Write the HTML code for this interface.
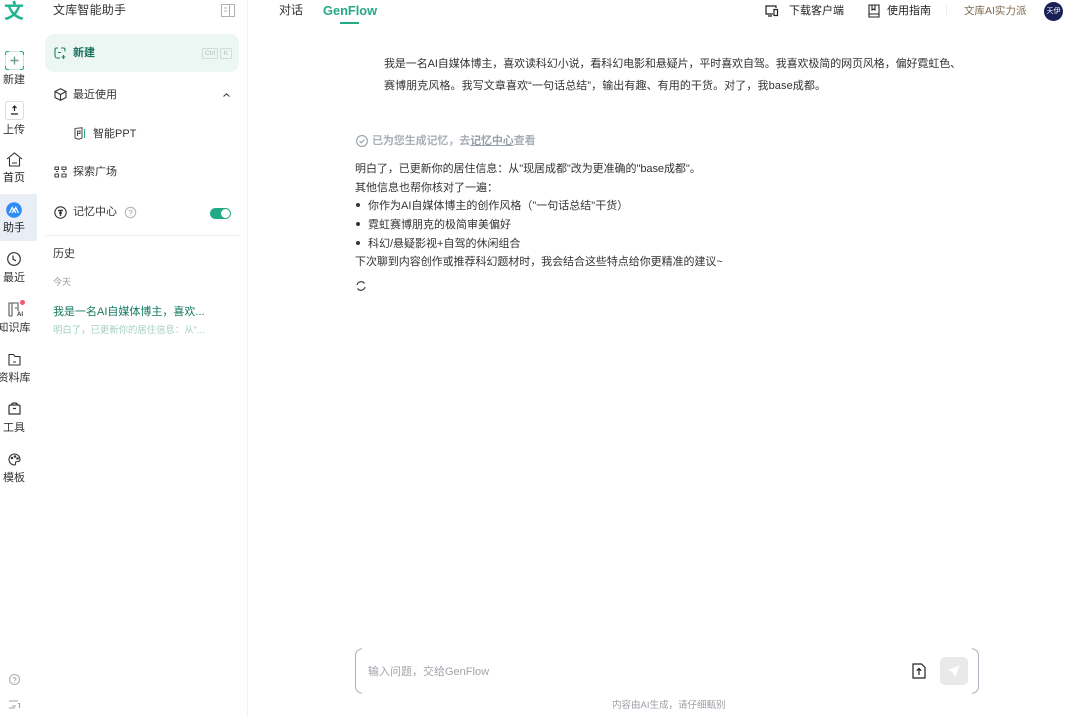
<!DOCTYPE html>
<html lang="zh-CN">
<head>
<meta charset="utf-8">
<title>文库智能助手</title>
<style>
html,body{margin:0;padding:0;width:1079px;height:717px;overflow:hidden;background:#fff}
body{position:relative;font-family:"Liberation Sans","Noto Sans CJK SC",sans-serif;color:#2b2f36}
.t{position:absolute;white-space:nowrap;line-height:16px;height:16px;font-size:11px}
.c{transform:translateX(-50%);font-size:11px;color:#333}
.b{position:absolute;display:block}
svg{position:absolute;overflow:visible;fill:none;stroke:#333;stroke-width:1.1}
</style>
</head>
<body>
<!-- rail -->
<div class="b" style="left:0;top:194px;width:37px;height:47px;background:#e9edf5"></div>
<div class="t" style="left:4px;top:0;font-size:20px;line-height:24px;height:24px;font-weight:bold;color:#1fb58f">文</div>

<div class="b" style="left:5px;top:51px;width:17px;height:17px;border:1px solid #d5dce0;border-radius:3px"></div>
<svg style="left:5px;top:51px" width="19" height="19"><path d="M.5 4V2.500C.5 1.200 1.200.5 2.500.5H4M15 .5H16.500C17.800.5 18.500 1.200 18.500 2.500V4M18.500 15V16.500C18.500 17.800 17.800 18.500 16.500 18.500H15M4 18.500H2.500C1.200 18.500.5 17.800.5 16.500V15" stroke="#26a985"/></svg>
<svg style="left:9px;top:55px" width="11" height="11"><path d="M5.500 1.500V9.500M1.500 5.500H9.500" stroke="#6f9c95" stroke-width="1.400"/></svg>
<div class="t c" style="left:14px;top:72px">新建</div>

<div class="b" style="left:5px;top:101px;width:17px;height:17px;border:1px solid #dcdce2;border-radius:3px"></div>
<svg style="left:9px;top:104px" width="11" height="12"><path d="M5.500 2V7M3.500 4L5.500 2L7.500 4M2 10H9" stroke="#222" stroke-width="1.200"/></svg>
<div class="t c" style="left:14px;top:122px">上传</div>

<svg style="left:6px;top:152px" width="17" height="15"><path d="M1 7L8.500 1L16 7M3.500 6V14H13.500V6M6 11H11"/></svg>
<div class="t c" style="left:14px;top:170px;color:#222">首页</div>

<svg style="left:6px;top:202px" width="16" height="16"><circle cx="8" cy="8" r="7.800" fill="#2d8cf6" stroke="none"/><path d="M3.500 11L6.200 5.500L8 9L9.800 5.500L12.500 11M6 11L8 7.500L10 11" stroke="#fff" stroke-width="1.200"/></svg>
<div class="t c" style="left:14px;top:220px;color:#222">助手</div>

<svg style="left:7px;top:252px" width="14" height="14"><circle cx="7" cy="7" r="6.300" stroke-width="1.200"/><path d="M6 3.500V7L9 9" stroke-width="1.200"/></svg>
<div class="t c" style="left:14px;top:270px">最近</div>

<svg style="left:8px;top:302px" width="14" height="15"><path d="M1 14V1H10V9M1 14H4M4 1V14M7 6H9" stroke="#555"/></svg>
<div class="b" style="left:20px;top:300px;width:5px;height:5px;border-radius:50%;background:#f5566b"></div>
<div class="t" style="left:17px;top:311px;font-size:6px;font-weight:bold;line-height:8px;height:8px;color:#333">AI</div>
<div class="t c" style="left:14px;top:320px">知识库</div>

<svg style="left:8px;top:353px" width="13" height="13"><path d="M1 12V1.500H5.500L7 3.500H12V12ZM5 9H8"/></svg>
<div class="t c" style="left:14px;top:370px">资料库</div>

<svg style="left:8px;top:402px" width="13" height="13"><path d="M1 4.500C1 3.500 1.500 3 2.500 3H10.500C11.500 3 12 3.500 12 4.500V12H1ZM3.500 3C3.500 1.500 4.500 1 6.500 1S9.500 1.500 9.500 3M5 6.500H8" stroke-width="1.200"/></svg>
<div class="t c" style="left:14px;top:420px">工具</div>

<svg style="left:8px;top:453px" width="13" height="13"><path d="M6.500 1A5.500 5.500 0 1 0 6.500 12C8 12 7.500 10.500 7.500 9.500S9 8.500 10 8.500 12 8 12 6.500C12 3.500 9.500 1 6.500 1Z"/><circle cx="4" cy="5" r=".7" fill="#333"/><circle cx="7" cy="3.500" r=".7" fill="#333"/><circle cx="9.500" cy="5.500" r=".7" fill="#333"/></svg>
<div class="t c" style="left:14px;top:470px">模板</div>

<svg style="left:9px;top:674px" width="11" height="11"><circle cx="5.500" cy="5.500" r="5" stroke="#aab0b8"/><path d="M4 4.500C4 3.500 7 3 7 4.800C7 5.800 5.500 5.800 5.500 7M5.500 8V8.800" stroke="#aab0b8"/></svg>
<svg style="left:9px;top:700px" width="11" height="10"><path d="M0 1H9M0 8H6M9 3.500H10.500V8M3 6H7" stroke="#9aa0a8"/></svg>

<!-- side panel -->
<div class="t" style="left:53px;top:2px;font-size:12px;color:#333;letter-spacing:.2px">文库智能助手</div>
<svg style="left:221px;top:4px" width="14" height="13"><path d="M.5.5H13.500V12.500H.5ZM8.500.5V12.500M3 4H6M3 7H6" stroke="#aeb1b6"/></svg>

<div class="b" style="left:45px;top:34px;width:194px;height:38px;background:#ecf6f3;border-radius:9px"></div>
<svg style="left:54px;top:47px" width="13" height="12"><path d="M4 1H2.500C1.500 1 1 1.800 1 2.500V8.500C1 10 2 11 3 11H6M7 1H9.500C10.500 1 11 1.800 11 2.500V4.500M4 5.500H7M9.500 8V12M7.500 10H11.500" stroke="#1d8168"/></svg>
<div class="t" style="left:73px;top:45px;color:#136f59;font-weight:bold">新建</div>
<div class="b" style="left:202px;top:48px;width:14px;height:9px;border:1px solid #cfdcd8;border-radius:1.500px;font-size:6.500px;line-height:9px;text-align:center;color:#afc0bb">Ctrl</div>
<div class="b" style="left:220px;top:48px;width:10px;height:9px;border:1px solid #cfdcd8;border-radius:1.500px;font-size:6.500px;line-height:9px;text-align:center;color:#afc0bb">K</div>

<svg style="left:54px;top:88px" width="13" height="13"><path d="M6.500.8L12 3.500V9.500L6.500 12.200L1 9.500V3.500ZM1 3.500L6.500 6.500L12 3.500M6.500 6.500V12.200"/></svg>
<div class="t" style="left:73px;top:87px;color:#333">最近使用</div>
<svg style="left:223px;top:93px" width="7" height="4"><path d="M.5 3.500L3.500.8L6.500 3.500" stroke="#444"/></svg>

<svg style="left:74px;top:127px" width="10" height="13"><path d="M1 1.500L8 .7V11L4.500 12.300L1 11ZM3.500 9V4H6V6.500H3.500" stroke="#555"/></svg>
<div class="b" style="left:84px;top:129px;width:1px;height:9px;background:#2bab8c"></div>
<div class="t" style="left:93px;top:126px;color:#333">智能PPT</div>

<svg style="left:54px;top:166px" width="13" height="12"><path d="M1 1H4.500V3.500H1ZM8 1H12V3.500H8ZM1 8H4.500V11H1ZM8 8H12V11H8ZM2 5.500H4M9 5.500H11" stroke="#444"/></svg>
<div class="t" style="left:73px;top:164px;color:#333">探索广场</div>

<svg style="left:54px;top:206px" width="13" height="13"><circle cx="6.500" cy="6.500" r="5.700"/><path d="M4 4.500H9M6.500 4.500V10M5 7H8" stroke-width="1.400"/></svg>
<div class="t" style="left:73px;top:204px;color:#333">记忆中心</div>
<svg style="left:125px;top:207px" width="11" height="11"><circle cx="5.500" cy="5.500" r="5.200" stroke="#b5b8bc"/><path d="M4 4.300C4 3 7 3 7 4.700C7 5.700 5.500 5.800 5.500 7M5.500 8V8.800" stroke="#b5b8bc"/></svg>
<div class="b" style="left:210px;top:208px;width:21px;height:11px;background:#21ab85;border-radius:6px"></div>
<div class="b" style="left:221px;top:209px;width:9px;height:9px;background:#fff;border-radius:50%"></div>
<div class="b" style="left:45px;top:235px;width:194px;height:1px;background:#eceef0"></div>

<div class="t" style="left:53px;top:246px;color:#333">历史</div>
<div class="t" style="left:53px;top:274px;font-size:9px;color:#999">今天</div>
<div class="t" style="left:53px;top:304px;color:#137a5f">我是一名AI自媒体博主，喜欢...</div>
<div class="t" style="left:53px;top:322px;font-size:9.400px;color:#a5cfc3">明白了，已更新你的居住信息：从"...</div>
<div class="b" style="left:247px;top:0;width:1px;height:717px;background:#eff0f2"></div>

<!-- header -->
<div class="t" style="left:279px;top:2px;font-size:12px;color:#333">对话</div>
<div class="t" style="left:323px;top:3px;font-size:12.800px;font-weight:bold;color:#27a887">GenFlow</div>
<div class="b" style="left:340px;top:22px;width:19px;height:2px;background:#27a887"></div>

<svg style="left:765px;top:5px" width="13" height="12"><path d="M8 9H1V1H11V3M3 11H7M9 4.500H12.500V10.500H9Z" stroke="#222" stroke-width="1.200"/></svg>
<div class="t" style="left:789px;top:3px;color:#222">下载客户端</div>
<svg style="left:868px;top:4px" width="12" height="14"><path d="M1 1H11V13H1ZM1 10H11M4 1V6L5.500 5L7 6V1" stroke="#222"/></svg>
<div class="t" style="left:887px;top:3px;color:#222">使用指南</div>
<div class="b" style="left:946px;top:5px;width:1px;height:11px;background:#eceef0"></div>
<div class="t" style="left:964px;top:3px;font-size:10.500px;color:#7c6a4d">文库AI实力派</div>
<div class="b" style="left:1044px;top:2px;width:19px;height:19px;border-radius:50%;background:#1a1f58;color:#fff;font-size:7px;line-height:19px;text-align:center">天伊</div>

<!-- user message -->
<div class="t" style="left:384px;top:56px;font-size:11px;letter-spacing:-.1px;color:#333">我是一名AI自媒体博主，喜欢读科幻小说，看科幻电影和悬疑片，平时喜欢自驾。我喜欢极简的网页风格，偏好霓虹色、</div>
<div class="t" style="left:384px;top:78px;font-size:11px;letter-spacing:.09px;color:#333">赛博朋克风格。我写文章喜欢“一句话总结”，输出有趣、有用的干货。对了，我base成都。</div>

<!-- memory note -->
<svg style="left:356px;top:135px" width="12" height="12"><circle cx="6" cy="6" r="5.400" stroke="#9aa1a8"/><path d="M3.500 6L5.300 7.800L8.500 4.500" stroke="#9aa1a8"/></svg>
<div class="t" style="left:372px;top:133px;color:#a9afb8;font-weight:bold;letter-spacing:-.1px">已为您生成记忆，去<span style="text-decoration:underline;color:#98a0aa">记忆中心</span>查看</div>

<!-- answer -->
<div class="t" style="left:355px;top:161px;color:#333;letter-spacing:-.05px">明白了，已更新你的居住信息：从"现居成都"改为更准确的"base成都"。</div>
<div class="t" style="left:355px;top:180px;color:#333">其他信息也帮你核对了一遍：</div>
<div class="b" style="left:356px;top:203px;width:4px;height:4px;border-radius:50%;background:#333"></div>
<div class="t" style="left:368px;top:198px;color:#333">你作为AI自媒体博主的创作风格（"一句话总结"干货）</div>
<div class="b" style="left:356px;top:222px;width:4px;height:4px;border-radius:50%;background:#333"></div>
<div class="t" style="left:368px;top:217px;color:#333">霓虹赛博朋克的极简审美偏好</div>
<div class="b" style="left:356px;top:241px;width:4px;height:4px;border-radius:50%;background:#333"></div>
<div class="t" style="left:368px;top:236px;color:#333">科幻/悬疑影视+自驾的休闲组合</div>
<div class="t" style="left:355px;top:254px;color:#333;letter-spacing:-.05px">下次聊到内容创作或推荐科幻题材时，我会结合这些特点给你更精准的建议~</div>
<svg style="left:356px;top:281px" width="10" height="10"><path d="M1 4A4.200 4.200 0 0 1 8.500 2.500M9 6A4.200 4.200 0 0 1 1.500 7.500" stroke="#333"/></svg>

<!-- input -->
<svg style="left:355px;top:648px" width="624" height="46"><path d="M7 .5C3 1.500.5 4 .5 8V38C.5 42 3 44.500 7 45.500M617 .5C621 1.500 623.500 4 623.500 8V38C623.500 42 621 44.500 617 45.500" stroke="#aeb4c0"/></svg>
<div class="t" style="left:368px;top:664px;color:#a0a4aa">输入问题，交给GenFlow</div>
<svg style="left:912px;top:663px" width="14" height="16"><path d="M1 1H9.500L13 4.500V15H1ZM7 12V5.500M4.800 7.700L7 5.500L9.200 7.700" stroke="#222" stroke-width="1.200"/></svg>
<div class="b" style="left:940px;top:657px;width:28px;height:28px;background:#e9e9e9;border-radius:5px"></div>
<svg style="left:947px;top:664px" width="14" height="14"><path d="M13 1L1 6L5.500 8L8 13Z" fill="#fff" stroke="none"/></svg>
<div class="t" style="left:612px;top:698px;font-size:9.500px;color:#9b9fa6">内容由AI生成，请仔细甄别</div>
</body>
</html>
